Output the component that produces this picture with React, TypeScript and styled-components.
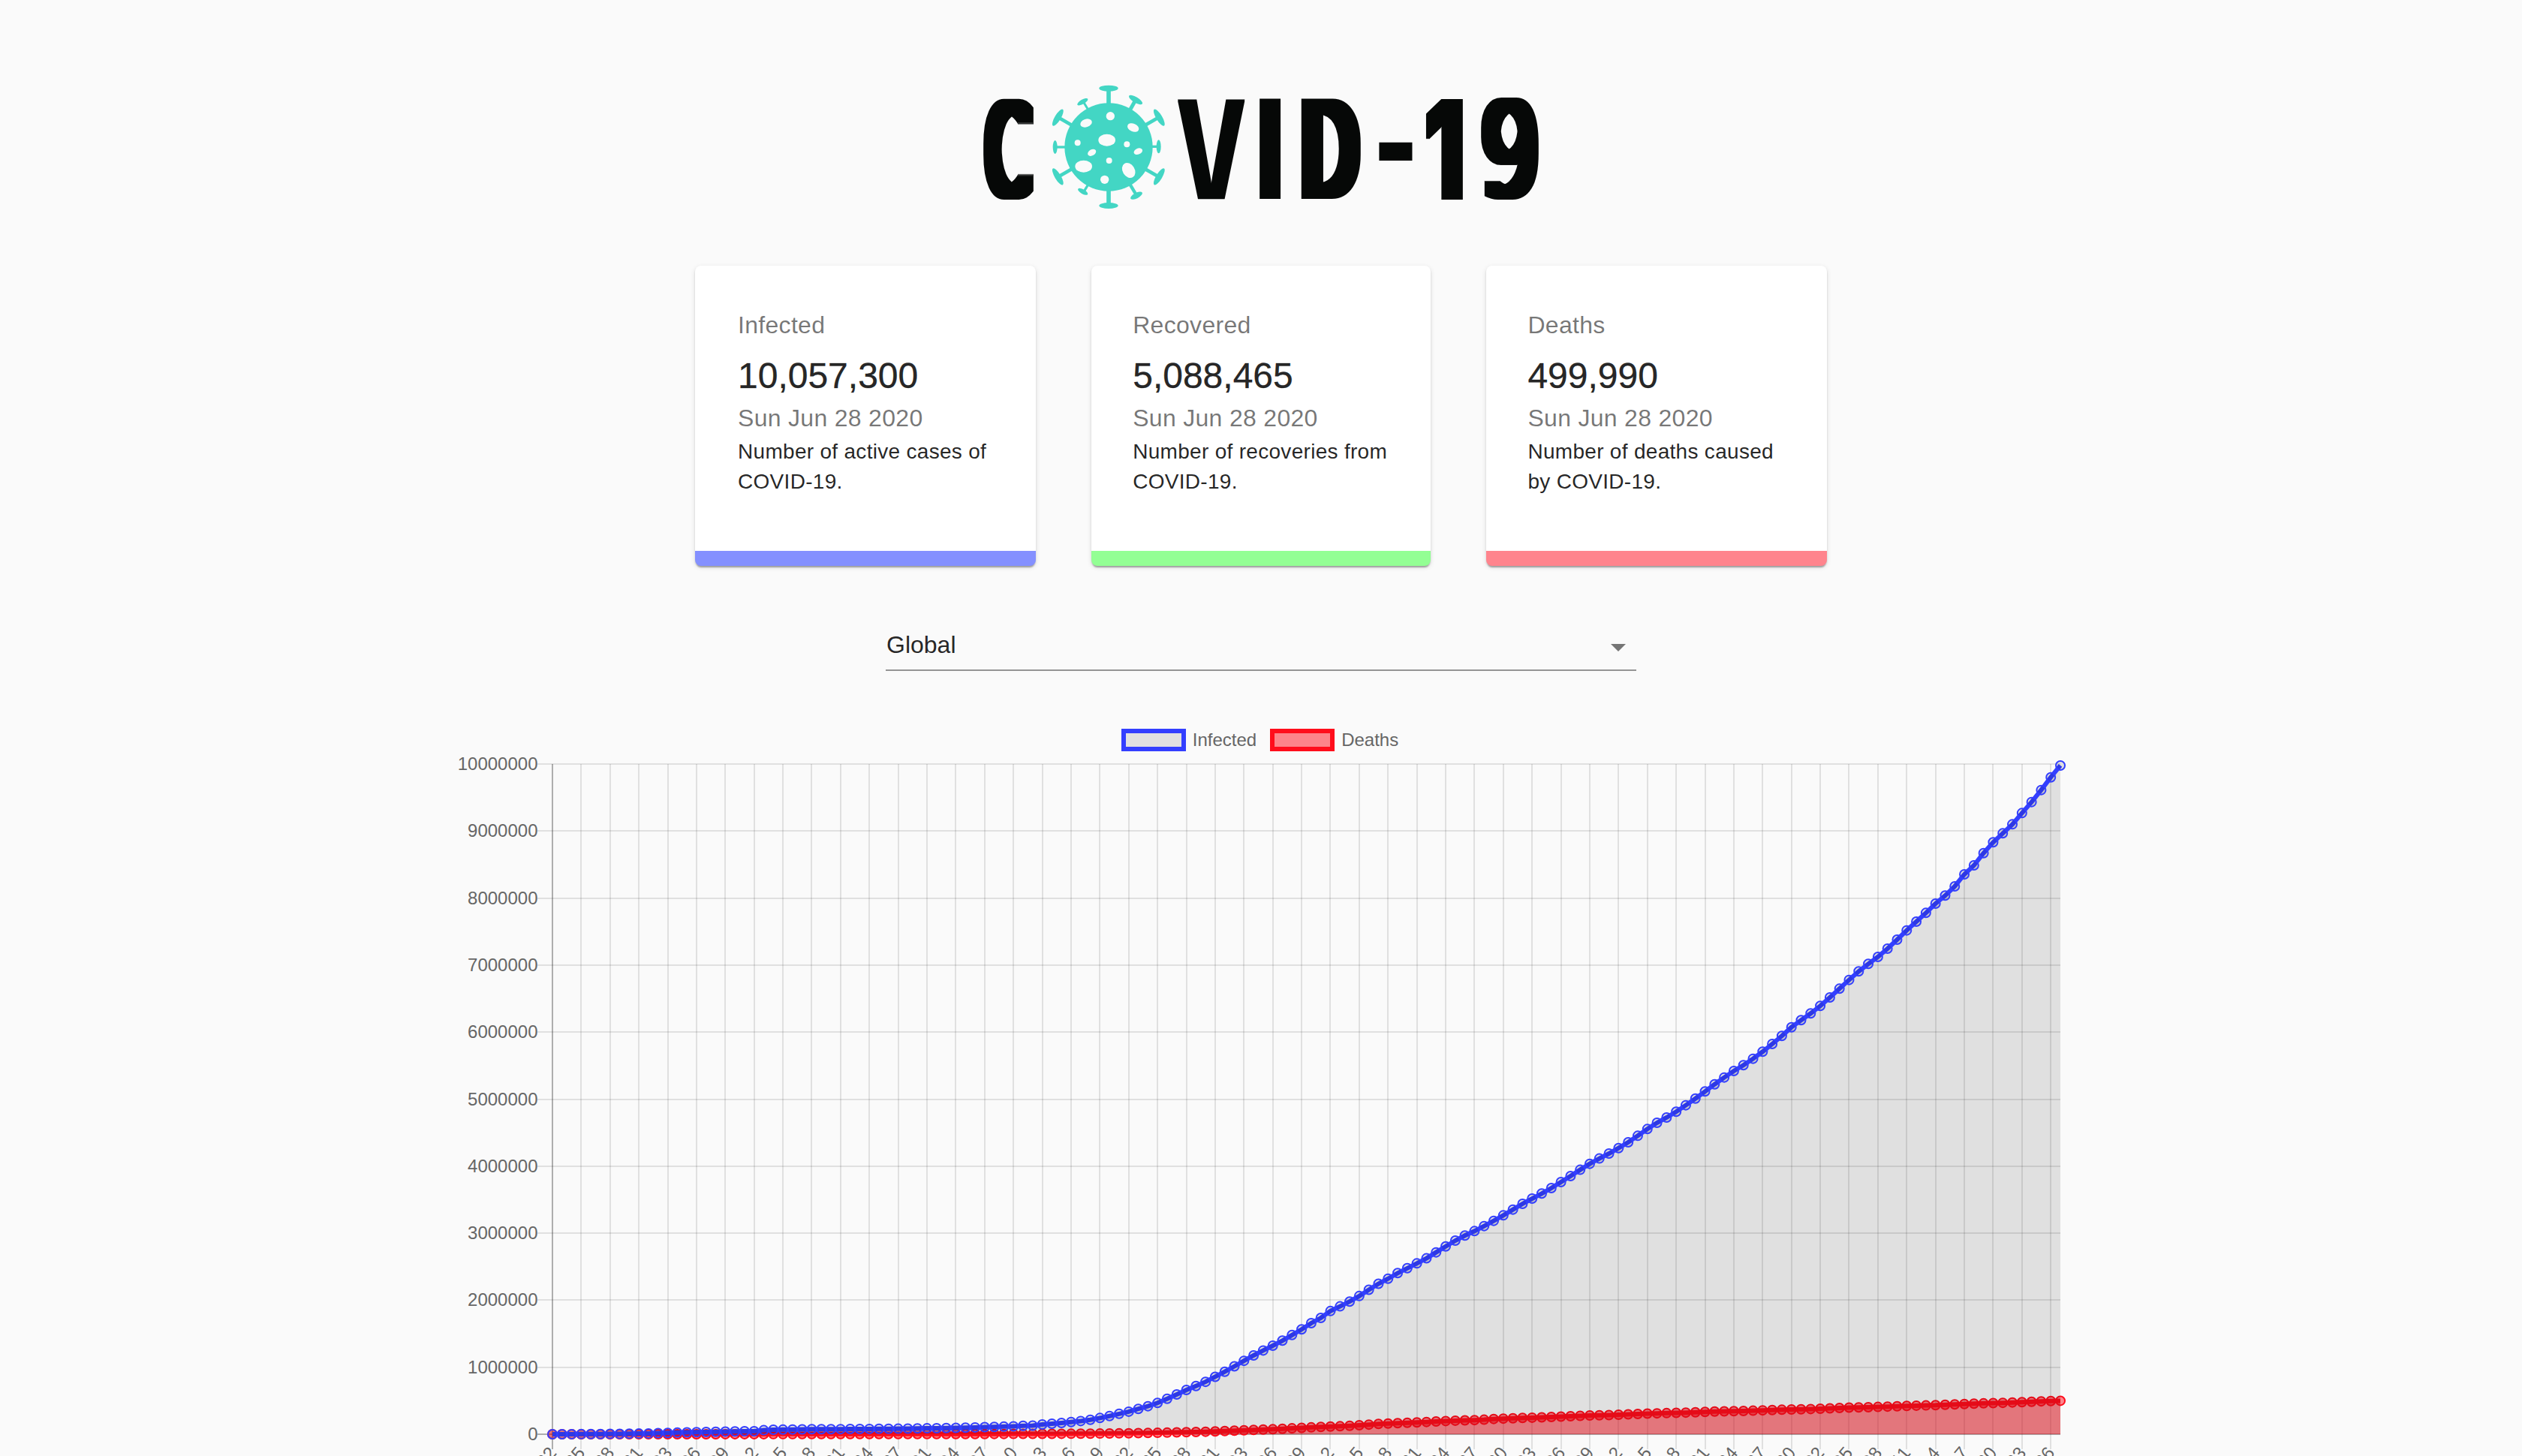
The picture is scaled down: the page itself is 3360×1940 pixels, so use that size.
import React from "react";
import styled, { createGlobalStyle } from "styled-components";

const Global = createGlobalStyle`
  html, body { margin: 0; background: #fafafa; }
  body { font-family: "Liberation Sans", Arial, sans-serif; overflow: hidden; }
  *, *::before, *::after { box-sizing: border-box; }
`;

const Page = styled.div`
  width: 3360px;
  height: 1940px;
  overflow: hidden;
  display: flex;
  flex-direction: column;
  align-items: center;
  padding-top: 114px;
`;

const LogoSvg = styled.svg`
  display: block;
  width: 740px;
  height: 164px;
  flex: none;
  overflow: visible;
`;

interface GlyphProps {
  id: string;
  ch: string;
  x: number;
  y: number;
  w: number;
  h: number;
  /* how far the strokes are thickened sideways and up/down */
  dx: number;
  dy: number;
  weight: number;
  font: string;
}

/* One letter of the logotype, stretched to fill its box and thickened into a block letter. */
function LogoGlyph({ id, ch, x, y, w, h, dx, dy, weight, font }: GlyphProps) {
  const t = React.useMemo(() => {
    const ctx = document.createElement("canvas").getContext("2d")!;
    ctx.font = `${weight} 200px ${font}`;
    const m = ctx.measureText(ch);
    const gw = m.actualBoundingBoxLeft + m.actualBoundingBoxRight;
    const gh = m.actualBoundingBoxAscent + m.actualBoundingBoxDescent;
    const sx = (w - dx * 2) / gw;
    const sy = (h - dy * 2) / gh;
    const tx = x + dx + m.actualBoundingBoxLeft * sx;
    const ty = y + dy + m.actualBoundingBoxAscent * sy;
    return `translate(${tx} ${ty}) scale(${sx} ${sy})`;
  }, [ch, x, y, w, h, dx, dy, weight, font]);
  return (
    <g filter={`url(#${id})`}>
      <filter
        id={id}
        x={x - 20}
        y={y - 20}
        width={w + 40}
        height={h + 40}
        filterUnits="userSpaceOnUse"
        colorInterpolationFilters="sRGB"
      >
        <feMorphology operator="dilate" radius={`${dx} ${dy}`} />
      </filter>
      <text transform={t} fontFamily={font} fontWeight={weight} fontSize={200} fill="#060807">
        {ch}
      </text>
    </g>
  );
}

const caps = [
  [88, 170, 38, 12, -59],
  [493, 170, 38, 12, 59],
  [88, 406, 38, 12, 59],
  [493, 406, 38, 12, -59],
  [187, 107, 24, 9, -30],
  [399, 99, 31, 11, 31],
  [188, 466, 22, 9, 30],
  [402, 482, 26, 11, -28],
  [77, 288, 9, 27, 0],
  [491, 286, 9, 27, 0],
  [291, 53, 38, 12, 0],
  [291, 522, 38, 12, 0],
];
const stems = [
  [291, 130, 291, 55, 17],
  [291, 450, 291, 520, 17],
  [130, 288, 78, 288, 10],
  [450, 286, 491, 286, 10],
  [150, 204, 94, 172, 14],
  [431, 204, 487, 172, 14],
  [150, 372, 94, 404, 14],
  [431, 372, 487, 404, 14],
  [209, 138, 192, 110, 9],
  [376, 140, 397, 103, 15],
  [209, 438, 192, 466, 10],
  [374, 433, 402, 480, 13],
];
const holes = [
  [298, 164, 17, 17, 0],
  [201, 192, 24, 16, -18],
  [389, 210, 24, 16, 24],
  [284, 260, 34, 24, 0],
  [167, 271, 12, 12, 0],
  [224, 310, 18, 12, -30],
  [364, 277, 12, 12, 0],
  [409, 305, 18, 12, -22],
  [293, 342, 12, 12, 0],
  [191, 365, 34, 24, 0],
  [371, 381, 24, 32, -32],
  [275, 418, 17, 17, 0],
];

function Virus() {
  return (
    <g transform="translate(70 -14) scale(.33333)" fill="#43d6c4">
      {stems.map(([x1, y1, x2, y2, w], i) => (
        <line key={i} x1={x1} y1={y1} x2={x2} y2={y2} stroke="#43d6c4" strokeWidth={w} />
      ))}
      {caps.map(([cx, cy, rx, ry, r], i) => (
        <ellipse key={i} cx={cx} cy={cy} rx={rx} ry={ry} transform={`rotate(${r} ${cx} ${cy})`} />
      ))}
      <circle cx={291} cy={288} r={176} />
      {holes.map(([cx, cy, rx, ry, r], i) => (
        <ellipse key={i} cx={cx} cy={cy} rx={rx} ry={ry} fill="#fafafa" transform={`rotate(${r} ${cx} ${cy})`} />
      ))}
    </g>
  );
}

const DEJAVU = '"DejaVu Sans", sans-serif';
const ROBOTO = "Roboto, sans-serif";
const INTER = "Inter, sans-serif";
const LIBERATION = '"Liberation Sans", sans-serif';

function Logo() {
  return (
    <LogoSvg viewBox="0 0 740 164" role="img" aria-label="COVID-19">
      <LogoGlyph id="lc" ch="C" x={0} y={17} w={67} h={135} dx={10} dy={7} weight={200} font={DEJAVU} />
      <Virus />
      <clipPath id="v-foot">
        <rect x={250} y={0} width={110} height={151.3} />
      </clipPath>
      <g clipPath="url(#v-foot)">
        <LogoGlyph id="lv" ch="V" x={259} y={17.7} w={90} h={160} dx={3} dy={1} weight={700} font={LIBERATION} />
      </g>
      <LogoGlyph id="li" ch="I" x={368} y={17.7} w={28.5} h={133.6} dx={2} dy={2} weight={900} font={ROBOTO} />
      <LogoGlyph id="ld" ch="D" x={423.6} y={17.7} w={79.6} h={133.6} dx={9} dy={4} weight={400} font={ROBOTO} />
      <LogoGlyph id="lh" ch="-" x={526.8} y={75} w={45} h={24.7} dx={2} dy={2} weight={900} font={ROBOTO} />
      <LogoGlyph id="l1" ch="1" x={589.4} y={17.5} w={50} h={134} dx={2} dy={2} weight={900} font={INTER} />
      <LogoGlyph id="l9" ch="9" x={663} y={16.5} w={77} h={135.7} dx={10} dy={6} weight={200} font={DEJAVU} />
    </LogoSvg>
  );
}

const Cards = styled.div`
  display: flex;
  gap: 74px;
  margin-top: 76px;
  flex: none;
`;

const Card = styled.section<{ $accent: string; $width: number; $inset: number }>`
  width: ${(p) => p.$width}px;
  height: 400px;
  padding: 55px 0 0 ${(p) => p.$inset}px;
  background: #fff;
  border-radius: 8px;
  border-bottom: 20px solid ${(p) => p.$accent};
  box-shadow: 0 4px 2px -2px rgba(0, 0, 0, 0.2), 0 2px 2px 0 rgba(0, 0, 0, 0.14),
    0 2px 6px 0 rgba(0, 0, 0, 0.12);
`;

const Muted = styled.p<{ $gutter?: boolean }>`
  margin: 0 0 ${(p) => (p.$gutter ? "12.4px" : "0")};
  font-size: 32px;
  line-height: 48px;
  letter-spacing: 0.00938em;
  color: rgba(0, 0, 0, 0.54);
`;

const Figure = styled.h2`
  margin: 0;
  font-size: 48px;
  font-weight: 400;
  line-height: 64px;
  color: rgba(0, 0, 0, 0.87);
  -webkit-text-stroke: 0.5px rgba(0, 0, 0, 0.6);
`;

const Body = styled.p`
  margin: 1px 0 0;
  font-size: 28px;
  line-height: 40px;
  letter-spacing: 0.01071em;
  white-space: pre-line;
  color: rgba(0, 0, 0, 0.87);
`;

const Select = styled.div`
  flex: none;
  width: 1000px;
  height: 64px;
  margin-top: 76px;
  border-bottom: 2px solid #949494;
  display: flex;
  align-items: center;
  justify-content: space-between;
  padding: 0 14px 4px 1px;
  font-size: 32px;
  color: rgba(0, 0, 0, 0.87);
`;

const Caret = styled.span`
  margin-top: 8px;
  border: 10px solid transparent;
  border-top-color: #757575;
  border-bottom: 0;
`;

const Legend = styled.div`
  flex: none;
  display: flex;
  align-items: center;
  gap: 18px;
  height: 30px;
  margin-top: 77px;
  margin-right: 3px;
`;

const LegendItem = styled.div`
  display: flex;
  align-items: center;
  gap: 9px;
  font-size: 24px;
  line-height: 30px;
  color: #666;
`;

const Swatch = styled.span<{ $line: string; $fill: string }>`
  width: 86px;
  height: 30px;
  border: 6px solid ${(p) => p.$line};
  background: ${(p) => p.$fill};
`;

const ChartSvg = styled.svg`
  display: block;
  flex: none;
  width: 3360px;
  height: 939px;
  overflow: visible;
  font-family: "Liberation Sans", Arial, sans-serif;
`;

const BLUE = "#333fff";
const RED = "#ff0d1b";

const infected = [
  555, 654, 941, 1434, 2118, 2927, 5578, 6166, 8234, 9927, 12038, 16787, 19881, 23892, 27635, 30817, 34391, 37120,
  40150, 42762, 44802, 45221, 60368, 66885, 69030, 71224, 73258, 75136, 75639, 76197, 76823, 78579, 78965, 79568,
  80413, 81395, 82754, 84120, 86011, 88369, 90306, 92840, 95120, 97886, 101801, 105847, 109821, 113590, 118620,
  125875, 128352, 145205, 156101, 167454, 181574, 197102, 214821, 242570, 272208, 304507, 336953, 378231, 418045,
  467653, 529591, 593291, 660693, 720140, 782389, 857487, 932605, 1013303, 1095917, 1176060, 1249754, 1321481,
  1396476, 1480202, 1565278, 1657526, 1735650, 1838000, 1908000, 1980000, 2062000, 2155000, 2245000, 2321000,
  2404000, 2477000, 2549000, 2625000, 2714000, 2803000, 2889000, 2964000, 3031000, 3106000, 3184000, 3266000,
  3352000, 3438000, 3516000, 3591000, 3673000, 3763000, 3852000, 3946000, 4035000, 4114000, 4188000, 4270000,
  4356000, 4453000, 4554000, 4647000, 4726000, 4812000, 4909000, 5009000, 5114000, 5222000, 5323000, 5420000,
  5506000, 5603000, 5708000, 5823000, 5943000, 6073000, 6178000, 6279000, 6391000, 6518000, 6648000, 6779000,
  6906000, 7018000, 7122000, 7245000, 7380000, 7518000, 7648000, 7779000, 7917000, 8037000, 8175000, 8354000,
  8488000, 8671000, 8832000, 8966000, 9100000, 9268000, 9433000, 9612000, 9802000, 9978000,
];
const deaths = [
  17, 18, 26, 42, 56, 82, 131, 133, 171, 213, 259, 362, 426, 492, 564, 634, 719, 806, 906, 1013, 1113, 1118, 1371,
  1523, 1666, 1770, 1868, 2007, 2122, 2247, 2251, 2458, 2469, 2629, 2708, 2770, 2814, 2872, 2941, 2996, 3085, 3160,
  3254, 3348, 3460, 3558, 3803, 3988, 4262, 4615, 4720, 5404, 5819, 6440, 7126, 7905, 8733, 9867, 11299, 12973,
  14651, 16505, 18625, 21181, 23970, 27198, 30652, 33925, 37582, 42107, 47180, 52983, 58787, 64606, 69374, 74565,
  81865, 88338, 95455, 102525, 108503, 114091, 119482, 125984, 134177, 143801, 153822, 159510, 165044, 169986,
  176583, 183066, 190858, 197159, 202846, 206544, 211159, 217153, 227638, 233388, 238650, 243808, 247470, 251537,
  257239, 263855, 269567, 274898, 279311, 282709, 286330, 291942, 297197, 302418, 307666, 311781, 315185, 318481,
  323285, 328115, 332924, 338157, 342097, 345059, 347500, 351500, 356600, 361300, 365900, 370100, 373000, 376500,
  381200, 386900, 392100, 396800, 400700, 403700, 407500, 412400, 417200, 422400, 426600, 430000, 433400, 440000,
  445300, 450400, 456700, 461000, 464900, 468600, 474000, 479200, 484200, 490900, 495800, 499200,
];

const TOP = 1001;
const X0 = 736;
const X1 = 2745;
const Y0 = 1911 - TOP;
const PER_M = 89.3;
const px = (i: number) => X0 + (i * (X1 - X0)) / 157;
const py = (v: number) => Y0 - (v / 1e6) * PER_M;

const tickLabels = Array.from({ length: 53 }, (_, k) =>
  new Date(Date.UTC(2020, 0, 22 + k * 3)).toISOString().slice(0, 10)
);

function Series({ data, line, fill }: { data: number[]; line: string; fill: string }) {
  const pts = data.map((v, i) => `${px(i).toFixed(2)},${py(v).toFixed(2)}`);
  return (
    <g>
      <polygon points={`${X0},${Y0} ${pts.join(" ")} ${px(data.length - 1)},${Y0}`} fill={fill} />
      <polyline points={pts.join(" ")} fill="none" stroke={line} strokeWidth={6} strokeLinejoin="miter" />
      {data.map((v, i) => (
        <circle key={i} cx={px(i)} cy={py(v)} r={6} fill={fill} stroke={line} strokeWidth={2} />
      ))}
    </g>
  );
}

function Chart() {
  return (
    <ChartSvg viewBox="0 0 3360 939">
      {Array.from({ length: 11 }, (_, m) => {
        const y = Math.round(py(m * 1e6));
        return (
          <g key={m}>
            <rect x={716} y={y - 1} width={X1 - 716} height={2} fill={m ? "rgba(0,0,0,.1)" : "rgba(0,0,0,.3)"} />
            <text x={716.5} y={y + 8} fontSize={24} fill="#666" textAnchor="end">
              {m * 1000000}
            </text>
          </g>
        );
      })}
      {tickLabels.map((label, k) => {
        const x = Math.round(px(k * 3));
        return (
          <g key={label}>
            <rect x={x - 1} y={17} width={2} height={Y0 + 20 - 17} fill={k ? "rgba(0,0,0,.1)" : "rgba(0,0,0,.3)"} />
            <text transform={`translate(${x} ${Y0 + 20}) rotate(-50)`} y={8.5} fontSize={24} fill="#666" textAnchor="end">
              {label}
            </text>
          </g>
        );
      })}
      <Series data={deaths} line={RED} fill="rgba(255,13,27,.5)" />
      <Series data={infected} line={BLUE} fill="rgba(0,0,0,.1)" />
    </ChartSvg>
  );
}

const stats = [
  { title: "Infected", value: "10,057,300", note: "Number of active cases of\nCOVID-19.", accent: "#8490ff", width: 454, inset: 57 },
  { title: "Recovered", value: "5,088,465", note: "Number of recoveries from\nCOVID-19.", accent: "#93ff94", width: 452, inset: 55.2 },
  { title: "Deaths", value: "499,990", note: "Number of deaths caused\nby COVID-19.", accent: "#ff848d", width: 454, inset: 55.4 },
];

export default function App() {
  return (
    <>
      <Global />
      <Page>
        <Logo />
        <Cards>
          {stats.map((s) => (
            <Card key={s.title} $accent={s.accent} $width={s.width} $inset={s.inset}>
              <Muted $gutter>{s.title}</Muted>
              <Figure>{s.value}</Figure>
              <Muted>Sun Jun 28 2020</Muted>
              <Body>{s.note}</Body>
            </Card>
          ))}
        </Cards>
        <Select>
          <span>Global</span>
          <Caret />
        </Select>
        <Legend>
          <LegendItem>
            <Swatch $line={BLUE} $fill="#e1e1e1" />
            Infected
          </LegendItem>
          <LegendItem>
            <Swatch $line={RED} $fill="#fd848a" />
            Deaths
          </LegendItem>
        </Legend>
        <Chart />
      </Page>
    </>
  );
}
